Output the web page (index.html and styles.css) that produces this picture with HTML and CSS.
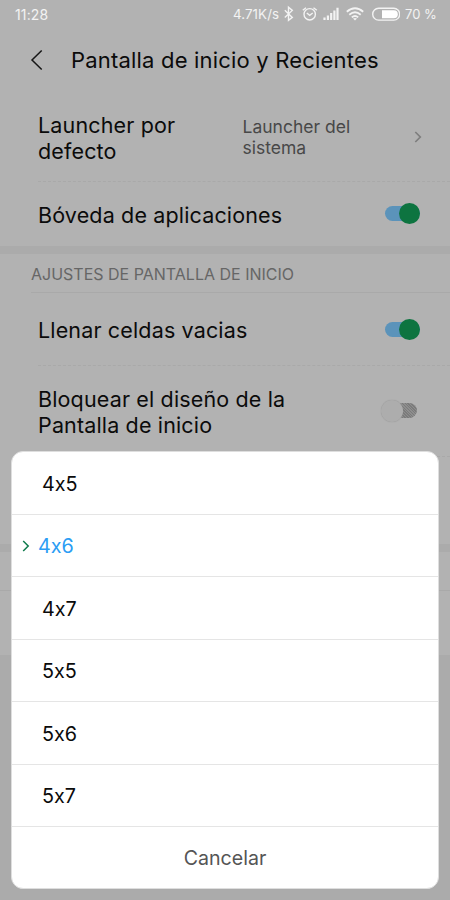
FILE: index.html
```html
<!DOCTYPE html>
<html lang="es">
<head>
<meta charset="utf-8">
<title>Pantalla de inicio y Recientes</title>
<link rel="stylesheet" href="styles.css">
</head>
<body>
<div class="phone">
  <div class="status">
    <span class="clock">11:28</span>
    <span class="speed">4.71K/s</span>
    <svg class="status-icons" width="120" height="20" viewBox="0 0 120 20" fill="none" stroke="#f3f3f3" stroke-width="1.4">
      <path d="M4.8 10.2 12.3 17.4 8.5 20.3V7.2L12.3 10.4 4.8 17.5" transform="translate(0 -4)"/>
      <circle cx="29.7" cy="10.3" r="5.7"/>
      <path d="M26.8 9 29.7 11.3 32.7 9M22.8 6.3 26 3.7M33.5 3.7 36.8 6.3"/>
      <path d="M44.5 16v-2.5M47.9 16v-4.4M51.2 16V9M54.4 16V6.6M57.5 16V3.8" stroke-width="2.2"/>
      <path d="M66.8 7.8Q75 .8 83.2 7.8M69.3 10.7Q75 5.8 80.7 10.7M71.8 13.4Q75 10.6 78.2 13.4" stroke-width="1.8"/>
      <path d="M73 14.6 75 16.6 77 14.6Q75 13.2 73 14.6Z" fill="#f3f3f3" stroke="none"/>
      <rect x="92.7" y="4.3" width="27" height="11.8" rx="5.9"/>
      <path d="M102 6.2h11.8a4 4 0 0 1 0 8H102Z" fill="#fff" stroke="none"/>
    </svg>
    <span class="battery">70 %</span>
  </div>
  <header class="header">
    <svg class="back" width="14" height="22" viewBox="0 0 14 22" fill="none" stroke="#161616" stroke-width="1.5"><path d="M11.7 1.5 2 11 11.7 20.5"/></svg>
    <h1>Pantalla de inicio y Recientes</h1>
  </header>
  <main class="settings">
    <div class="row launcher">
      <span class="label">Launcher por<br>defecto</span>
      <span class="value">Launcher del<br>sistema</span>
      <svg class="arrow" width="8" height="12" viewBox="0 0 8 12" fill="none" stroke="#7e7e7e" stroke-width="1.7"><path d="M1.3 1 6.3 6 1.3 11"/></svg>
    </div>
    <div class="row vault">
      <span class="label">Bóveda de aplicaciones</span>
      <span class="switch on"></span>
    </div>
    <div class="band"></div>
    <h2>AJUSTES DE PANTALLA DE INICIO</h2>
    <div class="row fill">
      <span class="label">Llenar celdas vacias</span>
      <span class="switch on"></span>
    </div>
    <div class="row lock">
      <span class="label">Bloquear el diseño de la<br>Pantalla de inicio</span>
      <span class="switch off"></span>
    </div>
    <div class="row grid-size"></div>
    <div class="band"></div>
    <div class="section-space"></div>
    <div class="row last"></div>
  </main>
  <div class="sheet">
    <div class="option">4x5</div>
    <div class="option selected"><svg width="8" height="12" viewBox="0 0 8 12" fill="none" stroke="#0e7b4c" stroke-width="1.5"><path d="M1.2 1 6.2 6 1.2 11"/></svg>4x6</div>
    <div class="option">4x7</div>
    <div class="option">5x5</div>
    <div class="option">5x6</div>
    <div class="option">5x7</div>
    <div class="option cancel">Cancelar</div>
  </div>
</div>
</body>
</html>
```
FILE: styles.css
```css
* { box-sizing: border-box; }
body { margin: 0; background: #ababab; font-family: Inter, "Liberation Sans", sans-serif; font-feature-settings: "calt" 0; color: #0b0b0b; }
.phone { position: relative; width: 450px; height: 900px; overflow: hidden; background: #ababab; }

.status { display: flex; align-items: center; height: 30px; padding: 0 14px 2px 15px; background: #b2b2b2; color: #f3f3f3; font-size: 14px; white-space: nowrap; }
.clock { flex: none; width: 218px; letter-spacing: .15px; }
.speed { flex: none; width: 47px; font-size: 13.3px; letter-spacing: .1px; }
.status-icons { flex: none; }
.battery { margin-left: 5px; font-size: 13px; }

.header { display: flex; align-items: center; height: 61px; padding: 0 0 2px 30px; background: #b2b2b2; }
.back { margin-right: 27px; }
h1 { margin: 0; font-size: 22px; line-height: 28px; font-weight: 400; letter-spacing: .19px; white-space: nowrap; }

.row { display: flex; align-items: center; position: relative; padding: 0 30px 0 38px; background: #b2b2b2; }
.row::after { content: ""; position: absolute; left: 38px; right: 0; bottom: 0; border-bottom: 1px dashed #a9a9a9; }
.label { font-size: 21.5px; line-height: 26px; letter-spacing: .15px; white-space: nowrap; }
.value { font-size: 17.5px; line-height: 21px; color: #484848; width: 171px; }
.launcher { height: 91px; padding-right: 28px; }
.launcher .label { flex: none; width: 204.5px; padding-top: 2px; }
.launcher .value { flex: none; }
.launcher .arrow { position: relative; }
.vault { height: 64px; }
.vault .label { padding-top: 1px; }
.vault::after, .grid-size::after, .last::after { display: none; }
.band { height: 8px; background: #ababab; }
h2 { margin: 0; height: 39px; padding-left: 31px; background: linear-gradient(#a9a9a9, #a9a9a9) 31px 100% / 100% 1px no-repeat #b2b2b2; font-size: 16px; line-height: 40px; font-weight: 400; color: #666; white-space: nowrap; }
.fill { height: 73px; }
.lock { height: 91px; }
.grid-size { height: 87px; }
.section-space { height: 39px; background: #b2b2b2; border-bottom: 1px solid #a9a9a9; }
.last { height: 64px; }

.switch { position: relative; flex: none; width: 35px; height: 15px; margin-left: auto; border-radius: 8px; }
.switch::before { content: ""; position: absolute; border-radius: 50%; width: 21px; height: 21px; top: -3px; }
.on { background: #5b93ba; margin-bottom: 1px; }
.on::before { right: 0; background: #0d7440; }
.off { width: 29px; margin: 0 3px 2px auto; background: repeating-linear-gradient(45deg, #7b7b7b 0 1px, #8e8e8e 1px 2px); }
.off::before { left: -7px; width: 22px; height: 22px; background: #adadad; box-shadow: 0 0 1px #8c8c8c; }

.sheet { position: absolute; left: 11px; top: 451px; width: 428px; height: 438px; display: grid; grid-template-rows: 63px 62px 63px 62px 63px 62px 1fr; background: #fff; border: 1px solid #dedede; border-radius: 12px; overflow: hidden; }
.option { display: flex; align-items: center; padding: 1px 0 0 30px; font-size: 19.8px; border-bottom: 1px solid #e5e5e5; }
.selected { padding-left: 10px; color: #2b9df4; }
.selected svg { margin: 0 8px 1px 0; }
.cancel { justify-content: center; padding-left: 0; border-bottom: 0; color: #555; font-size: 19.6px; }
```
